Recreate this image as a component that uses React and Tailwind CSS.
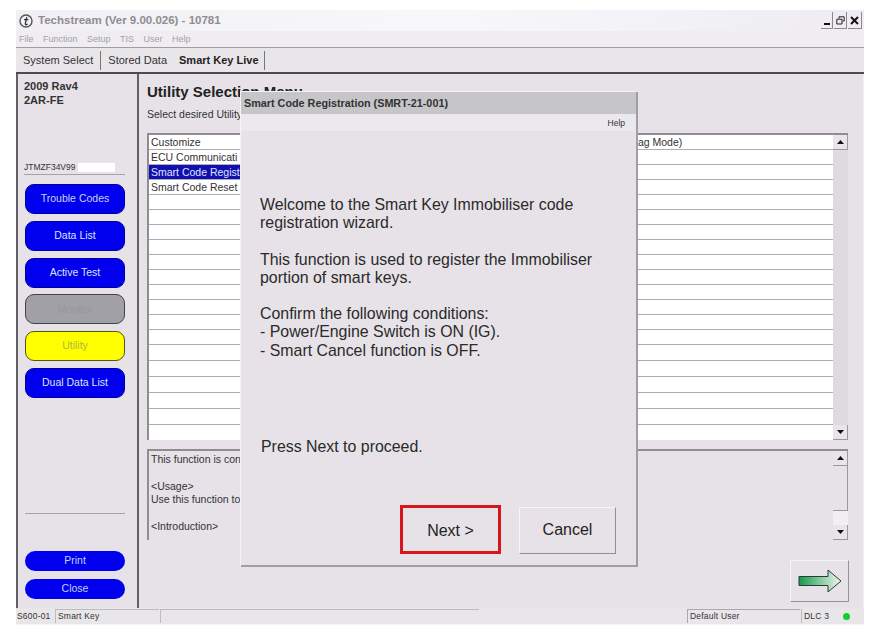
import React from "react";

const sideButtons = [
  { label: "Trouble Codes", cls: "bg-[#0000ee] border-[#00009a] text-[#c9d4f5]" },
  { label: "Data List", cls: "bg-[#0000ee] border-[#00009a] text-[#dbe4fa]" },
  { label: "Active Test", cls: "bg-[#0000ee] border-[#00009a] text-[#dbe4fa]" },
  { label: "Monitor", cls: "bg-[#a0a0a6] border-[#444448] text-[#97979d]" },
  { label: "Utility", cls: "bg-[#ffff00] border-[#55551a] text-[#b5b545]" },
  { label: "Dual Data List", cls: "bg-[#0000ee] border-[#00009a] text-[#dbe4fa]" },
];

const listRows = ["Customize", "ECU Communicati", "Smart Code Regist", "Smart Code Reset"];

function ScrollArrow({ up }) {
  return (
    <div className="flex h-[15px] w-[15px] shrink-0 items-center justify-center border-r border-b border-[#9b989c] bg-[#e8e5e9]">
      <svg width="7" height="4" viewBox="0 0 7 4">
        <path d={up ? "M3.5 0L7 4H0Z" : "M0 0H7L3.5 4Z"} fill="#111" />
      </svg>
    </div>
  );
}

export default function App() {
  return (
    <div className="relative h-[633px] w-[873px] overflow-hidden bg-white pl-[16px] pt-[10px] font-['Liberation_Sans',sans-serif]">
      <div className="flex h-[615px] w-[848px] flex-col bg-[#e6e2e7]">
        {/* title bar */}
        <div className="flex h-[21px] shrink-0 items-center justify-between bg-gradient-to-r from-[#f1eff3] via-[#f8f8fb] to-[#eeecf1] pl-[3px] pr-[2px]">
          <div className="flex items-center gap-[5px]">
            <svg width="14" height="14" viewBox="0 0 14 14">
              <circle cx="7" cy="7" r="6" fill="#f4f2f5" stroke="#555" strokeWidth="1.4" />
              <path d="M7.8 3.2L6.2 10.4M5 5.6H9.4M6.2 10.4Q7 11.2 8.6 10" fill="none" stroke="#333" strokeWidth="1.3" />
            </svg>
            <span className="text-[11.5px] font-bold text-[#8d8d92]">Techstream (Ver 9.00.026) - 10781</span>
          </div>
          <div className="flex gap-[1px]">
            <div className="flex h-[17px] w-[12px] items-end justify-center border-r border-b border-[#8b898d] pb-[3px]">
              <div className="h-[2px] w-[6px] bg-[#111]" />
            </div>
            <div className="flex h-[17px] w-[13px] items-center justify-center border-r border-b border-[#8b898d]">
              <svg width="9" height="9" viewBox="0 0 9 9">
                <path d="M3 2.5V.8H8.2V5H6.5M.8 3.2H6V8H.8Z" fill="none" stroke="#222" strokeWidth="1" />
              </svg>
            </div>
            <div className="flex h-[17px] w-[14px] items-center justify-center border-r border-b border-[#8b898d]">
              <svg width="9" height="9" viewBox="0 0 9 9">
                <path d="M1 1L8 8M8 1L1 8" stroke="#111" strokeWidth="2" />
              </svg>
            </div>
          </div>
        </div>

        {/* menu */}
        <div className="flex h-[17px] shrink-0 items-center gap-[9.5px] border-b border-[#9f9da1] bg-[#efedf1] pl-[3px] pt-px text-[9px] text-[#a3a2a8]">
          <span>File</span>
          <span>Function</span>
          <span>Setup</span>
          <span>TIS</span>
          <span>User</span>
          <span>Help</span>
        </div>

        {/* tabs */}
        <div className="flex h-[24px] shrink-0 items-center bg-[#e9e6ea] text-[11px] text-[#333]">
          <span className="flex h-[19px] items-center border-r border-[#77757a] pl-[7px] pr-[7px]">System Select</span>
          <span className="flex h-[19px] items-center pl-[7px] pr-[12px]">Stored Data</span>
          <span className="flex h-[19px] items-center border-r border-[#77757a] pr-[5px] font-bold text-[#222]">Smart Key Live</span>
        </div>
        <div className="h-[2px] shrink-0 bg-[#4c4b50]" />

        <div className="flex min-h-0 flex-1">
          {/* left panel */}
          <div className="flex w-[123px] shrink-0 flex-col border-x-2 border-[#616065] bg-[#e6e2e7] pl-[6px] pr-[12px] pt-[5px]">
            <div className="text-[11px] font-bold leading-[14px] text-[#333]">
              2009 Rav4
              <br />
              2AR-FE
            </div>
            <div className="mt-[54px] flex h-[14px] items-center border-b border-[#a5a3a8] text-[8.5px] text-[#333]">
              JTMZF34V99
              <span className="ml-[2px] h-[9px] w-[37px] bg-white" />
            </div>
            <div className="ml-px mt-[9px] flex flex-col gap-[6.8px]">
              {sideButtons.map((b) => (
                <div key={b.label} className={`flex h-[30px] items-center justify-center rounded-[9px] border text-[10.5px] ${b.cls}`}>
                  {b.label}
                </div>
              ))}
            </div>
            <div className="ml-px mt-[115px] h-px bg-[#a5a3a8]" />
            <div className="ml-px mt-[37px] flex flex-col gap-[8px]">
              <div className="flex h-[20px] items-center justify-center rounded-[10px] bg-[#0000ee] text-[10.5px] text-[#c4d0f5]">Print</div>
              <div className="flex h-[20px] items-center justify-center rounded-[10px] bg-[#0000ee] text-[10.5px] text-[#c4d0f5]">Close</div>
            </div>
          </div>

          {/* main panel */}
          <div className="flex min-w-0 flex-1 flex-col border-r border-[#f2f0f3] pl-[8px] pr-[15px]">
            <div className="mt-[8px] text-[15px] font-bold leading-[19px] text-[#222]">Utility Selection Menu</div>
            <div className="mt-[6px] text-[10.5px] leading-[14px] text-[#333]">Select desired Utility</div>
            <div className="mt-[12px] flex h-[307px] overflow-hidden border-l-2 border-t-2 border-[#8f8d92]">
              <div className="min-w-0 flex-1">
                {Array.from({ length: 20 }).map((_, i) => (
                  <div
                    key={i}
                    className={`flex items-center border-b border-[#aeacb0] bg-white text-[10.5px] text-[#333] ${i < 14 ? "h-[15px]" : "h-[16px]"}`}
                  >
                    <span className={`flex h-full w-[100px] shrink-0 items-center pl-[2px] pt-px ${i === 2 ? "bg-[#1010b0] text-[#e0e4ff]" : ""}`}>{listRows[i]}</span>
                    {i === 0 && <span className="ml-[379px] pt-px">Diag Mode)</span>}
                  </div>
                ))}
              </div>
              <div className="flex w-[15px] shrink-0 flex-col justify-between bg-[#dedbe0]">
                <ScrollArrow up />
                <ScrollArrow />
              </div>
            </div>
            <div className="mt-[9px] flex h-[91px] border-l-2 border-t-2 border-[#8f8d92]">
              <div className="min-w-0 flex-1 whitespace-pre-line pl-[2px] pt-[2px] text-[10.5px] leading-[13.4px] text-[#333]">
                {"This function is con\n\n<Usage>\nUse this function to\n\n<Introduction>"}
              </div>
              <div className="flex w-[15px] shrink-0 flex-col">
                <ScrollArrow up />
                <div className="h-[45px] border-r border-b border-[#9b989c] bg-[#e6e2e7]" />
                <div className="flex-1 bg-[#f1eff2]" />
                <ScrollArrow />
              </div>
            </div>
            <div className="mt-[20px] flex justify-end">
              <div className="mr-[-1px] flex h-[42px] w-[59px] items-center justify-center border border-r-[#96949a] border-b-[#96949a] border-l-[#f5f4f6] border-t-[#f5f4f6]">
                <svg width="44" height="24" viewBox="0 0 44 24">
                  <defs>
                    <linearGradient id="arrowFill" x1="0" x2="1" y1="0" y2="0">
                      <stop offset="0" stopColor="#169a4a" />
                      <stop offset="1" stopColor="#f1f6f1" />
                    </linearGradient>
                  </defs>
                  <path d="M1 7.5H30V1L43 12L30 23V16.5H1Z" fill="url(#arrowFill)" stroke="#2d3a33" strokeWidth="1" />
                </svg>
              </div>
            </div>
          </div>
        </div>

        {/* status bar */}
        <div className="flex h-[17px] shrink-0 items-center gap-[1px] border-b border-[#f6f5f7] bg-[#e9e6ea] text-[8.5px] tracking-[0.2px] text-[#333]">
          <span className="w-[38px] pl-[1px]">S600-01</span>
          <span className="flex h-[14px] w-[104px] items-center border-l border-t border-[#bdbbc0] pl-[2px]">Smart Key</span>
          <span className="h-[14px] w-[319px] border-l border-t border-[#bdbbc0]" />
          <span className="ml-[207px] flex h-[14px] w-[113px] items-center border-l border-t border-[#a9a7ac] pl-[2px]">Default User</span>
          <span className="flex h-[14px] items-center border-l border-[#bdbbc0] pl-[2px]">DLC 3</span>
          <span className="ml-[13px] h-[7px] w-[7px] rounded-full bg-[#10d030]" />
        </div>
      </div>

      {/* wizard dialog lying over the window */}
      <div className="absolute left-[241px] top-[92px] flex h-[475px] w-[397px] flex-col border-r-2 border-b-2 border-[#a09ea3] bg-[#e6e2e7] shadow-[-1px_-1px_0_#f4f3f5]">
        <div className="flex h-[22px] shrink-0 items-center bg-[#c6c5c8] pl-[3px] text-[10.8px] font-bold text-[#333]">Smart Code Registration (SMRT-21-001)</div>
        <div className="h-[17px] shrink-0 bg-[#ebe9ed] pr-[11px] pt-[3px] text-right text-[8.5px] text-[#333]">Help</div>
        <div className="ml-[19px] mt-[65px] whitespace-pre-line text-[15.9px] leading-[18.2px] text-[#2a2a2a]">
          {"Welcome to the Smart Key Immobiliser code\nregistration wizard.\n\nThis function is used to register the Immobiliser\nportion of smart keys.\n\nConfirm the following conditions:\n- Power/Engine Switch is ON (IG).\n- Smart Cancel function is OFF."}
        </div>
        <div className="ml-[20px] mt-[78px] text-[15.9px] leading-[18px] text-[#2a2a2a]">Press Next to proceed.</div>
        <div className="mt-[49px] flex items-start pl-[159px]">
          <div className="flex h-[49px] w-[101px] items-center justify-center border-[3px] border-[#d8141c] bg-[#e6e2e7] pt-[3px] text-[16px] text-[#222]">Next &gt;</div>
          <div className="ml-[18px] mt-[2px] flex h-[47px] w-[97px] items-center justify-center border border-r-[#908e93] border-b-[#908e93] border-t-[#f6f5f7] border-l-[#f6f5f7] text-[16px] text-[#222]">Cancel</div>
        </div>
      </div>
    </div>
  );
}
